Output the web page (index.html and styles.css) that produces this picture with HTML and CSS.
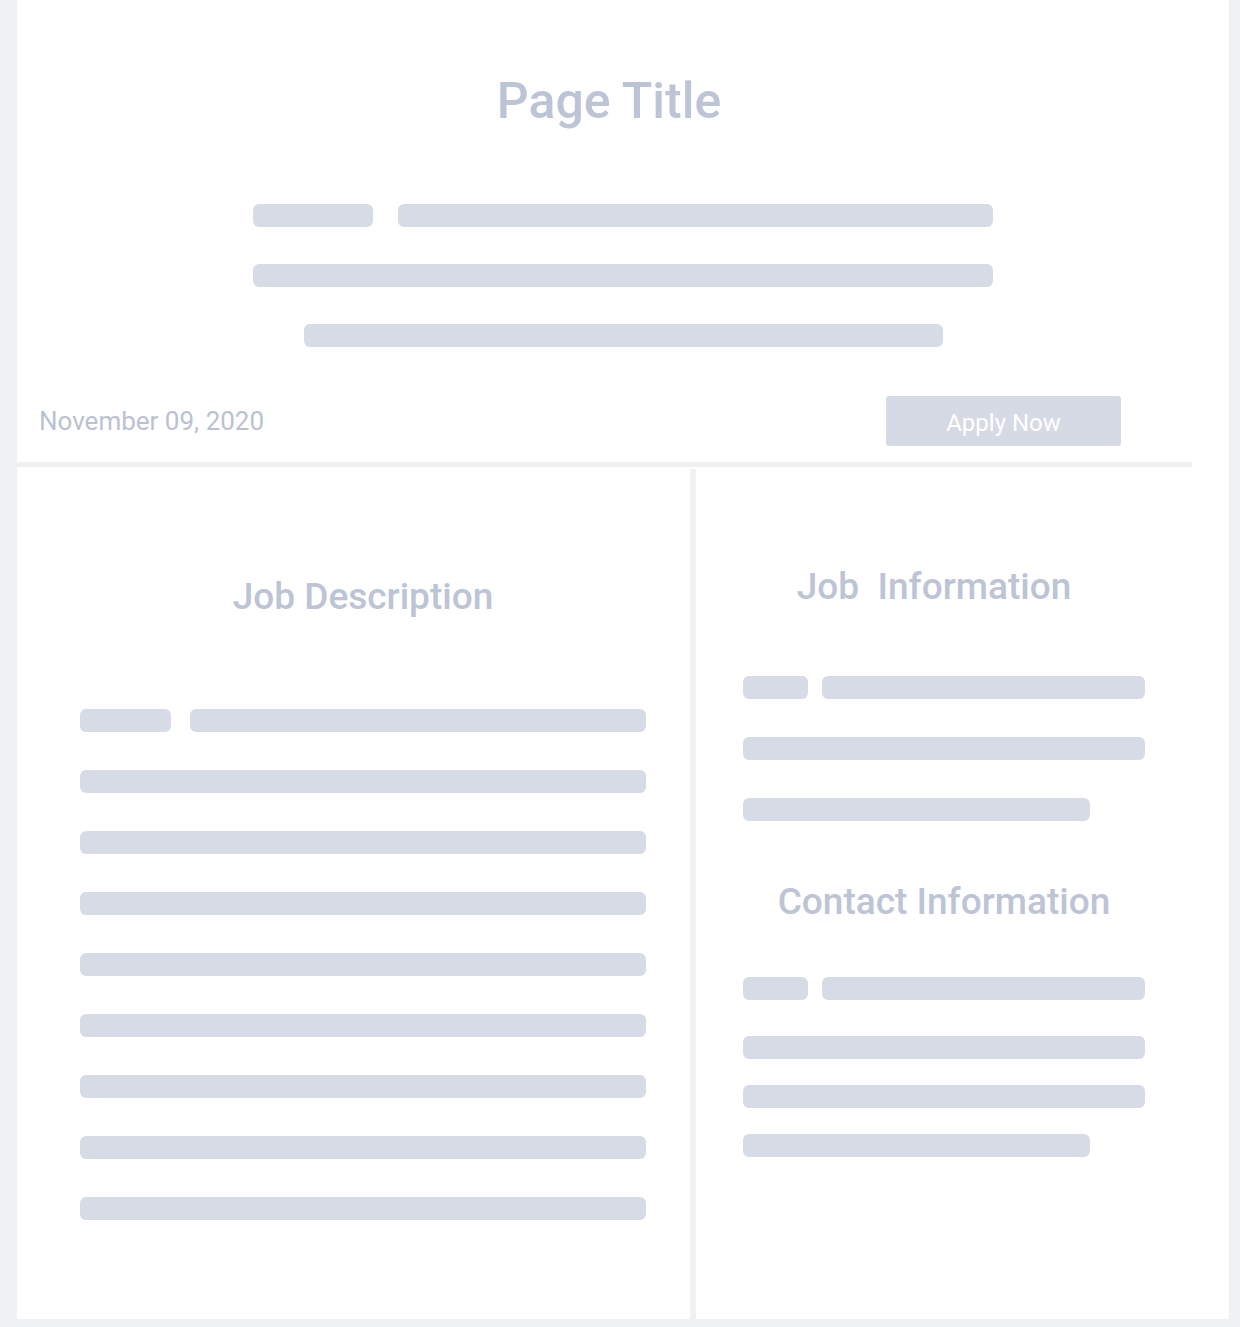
FILE: index.html
```html
<!DOCTYPE html>
<html lang="en">
<head>
    <meta charset="UTF-8">
    <meta name="viewport" content="width=device-width, initial-scale=1.0">
    <title>Job Posting</title>
    <link rel="stylesheet" href="styles.css">
</head>
<body>
    <div class="page">
        <header class="hero">
            <h1 class="hero-title">Page Title</h1>

            <div class="hero-lines">
                <div class="bar-row">
                    <span class="bar bar-120"></span>
                    <span class="bar bar-595"></span>
                </div>
                <div class="bar-row">
                    <span class="bar bar-740"></span>
                </div>
                <div class="bar-row">
                    <span class="bar bar-639"></span>
                </div>
            </div>

            <div class="hero-footer">
                <p class="date">November 09, 2020</p>
                <button class="apply-btn">Apply Now</button>
            </div>
        </header>

        <div class="divider"></div>

        <div class="details">
            <section class="panel panel-main">
                <h2 class="panel-title">Job Description</h2>
                <div class="lines lines-main">
                    <div class="bar-row split">
                        <span class="bar bar-91"></span>
                        <span class="bar bar-fill"></span>
                    </div>
                    <span class="bar"></span>
                    <span class="bar"></span>
                    <span class="bar"></span>
                    <span class="bar"></span>
                    <span class="bar"></span>
                    <span class="bar"></span>
                    <span class="bar"></span>
                    <span class="bar"></span>
                </div>
            </section>

            <aside class="panel panel-side">
                <h2 class="panel-title title-job">Job&nbsp; Information</h2>
                <div class="lines lines-job">
                    <div class="bar-row split-sm">
                        <span class="bar bar-65"></span>
                        <span class="bar bar-fill"></span>
                    </div>
                    <span class="bar"></span>
                    <span class="bar bar-347"></span>
                </div>

                <h2 class="panel-title title-contact">Contact Information</h2>
                <div class="lines lines-contact">
                    <div class="bar-row split-sm">
                        <span class="bar bar-65"></span>
                        <span class="bar bar-fill"></span>
                    </div>
                    <span class="bar first-gap"></span>
                    <span class="bar"></span>
                    <span class="bar bar-347"></span>
                </div>
            </aside>
        </div>
    </div>
</body>
</html>
```

FILE: styles.css
```css
* {
    margin: 0;
    padding: 0;
    box-sizing: border-box;
}
body {
    background-color: #eff1f3;
    font-family: Roboto, "Liberation Sans", sans-serif;
    color: #bcc4d5;
    height: 1327px;
    overflow: hidden;
}
.page {
    width: 1212px;
    margin-left: 17px;
}

/* top card */
.hero {
    background: #fff;
    height: 462px;
    padding-top: 76px;
}
.hero-title {
    font-size: 50px;
    line-height: 1;
    font-weight: 500;
    text-align: center;
    margin-right: 28px;
}
.hero-lines {
    display: flex;
    flex-direction: column;
    gap: 37px;
    margin-top: 78px;
}
.hero-lines .bar-row {
    justify-content: center;
    gap: 25px;
}
.hero-lines .bar {
    height: 23px;
}
.hero-footer {
    display: flex;
    justify-content: space-between;
    align-items: center;
    margin-top: 49px;
    padding: 0 108px 0 22px;
}
.date {
    font-size: 26px;
    line-height: 1;
    color: #bac2d1;
}
.apply-btn {
    width: 235px;
    height: 50px;
    border: none;
    border-radius: 3px;
    background: #d6dae4;
    color: #fff;
    font-family: inherit;
    font-size: 24px;
    padding-top: 4px;
}

.divider {
    height: 7px;
    background: #fff;
}
.divider::before {
    content: '';
    display: block;
    width: 1175px;
    height: 5px;
    background: #eef0f2;
}

/* lower columns */
.details {
    display: grid;
    grid-template-columns: 673px 533px;
    gap: 6px;
    height: 850px;
}
.panel {
    background: #fff;
    display: flex;
    flex-direction: column;
}
.panel-main {
    padding: 109px 44px 0 63px;
}
.panel-side {
    padding: 99px 84px 0 47px;
}
.panel-title {
    font-size: 37px;
    line-height: 1;
    font-weight: 500;
    text-align: center;
}
.title-job {
    margin-right: 20px;
}
.title-contact {
    margin-top: 62px;
}
.lines {
    display: flex;
    flex-direction: column;
}
.lines-main {
    gap: 38px;
    margin-top: 94px;
}
.lines-job {
    gap: 38px;
    margin-top: 71px;
}
.lines-contact {
    gap: 26px;
    margin-top: 57px;
}
.lines-contact .first-gap {
    margin-top: 10px;
}

/* skeleton bars */
.bar-row {
    display: flex;
}
.split {
    gap: 19px;
}
.split-sm {
    gap: 14px;
}
.bar {
    display: block;
    height: 23px;
    background: #d7dbe5;
    border-radius: 6px;
}
.bar-fill { flex: 1; }
.bar-65 { width: 65px; }
.bar-91 { width: 91px; }
.bar-120 { width: 120px; }
.bar-347 { width: 347px; }
.bar-595 { width: 595px; }
.bar-639 { width: 639px; }
.bar-740 { width: 740px; }
```
